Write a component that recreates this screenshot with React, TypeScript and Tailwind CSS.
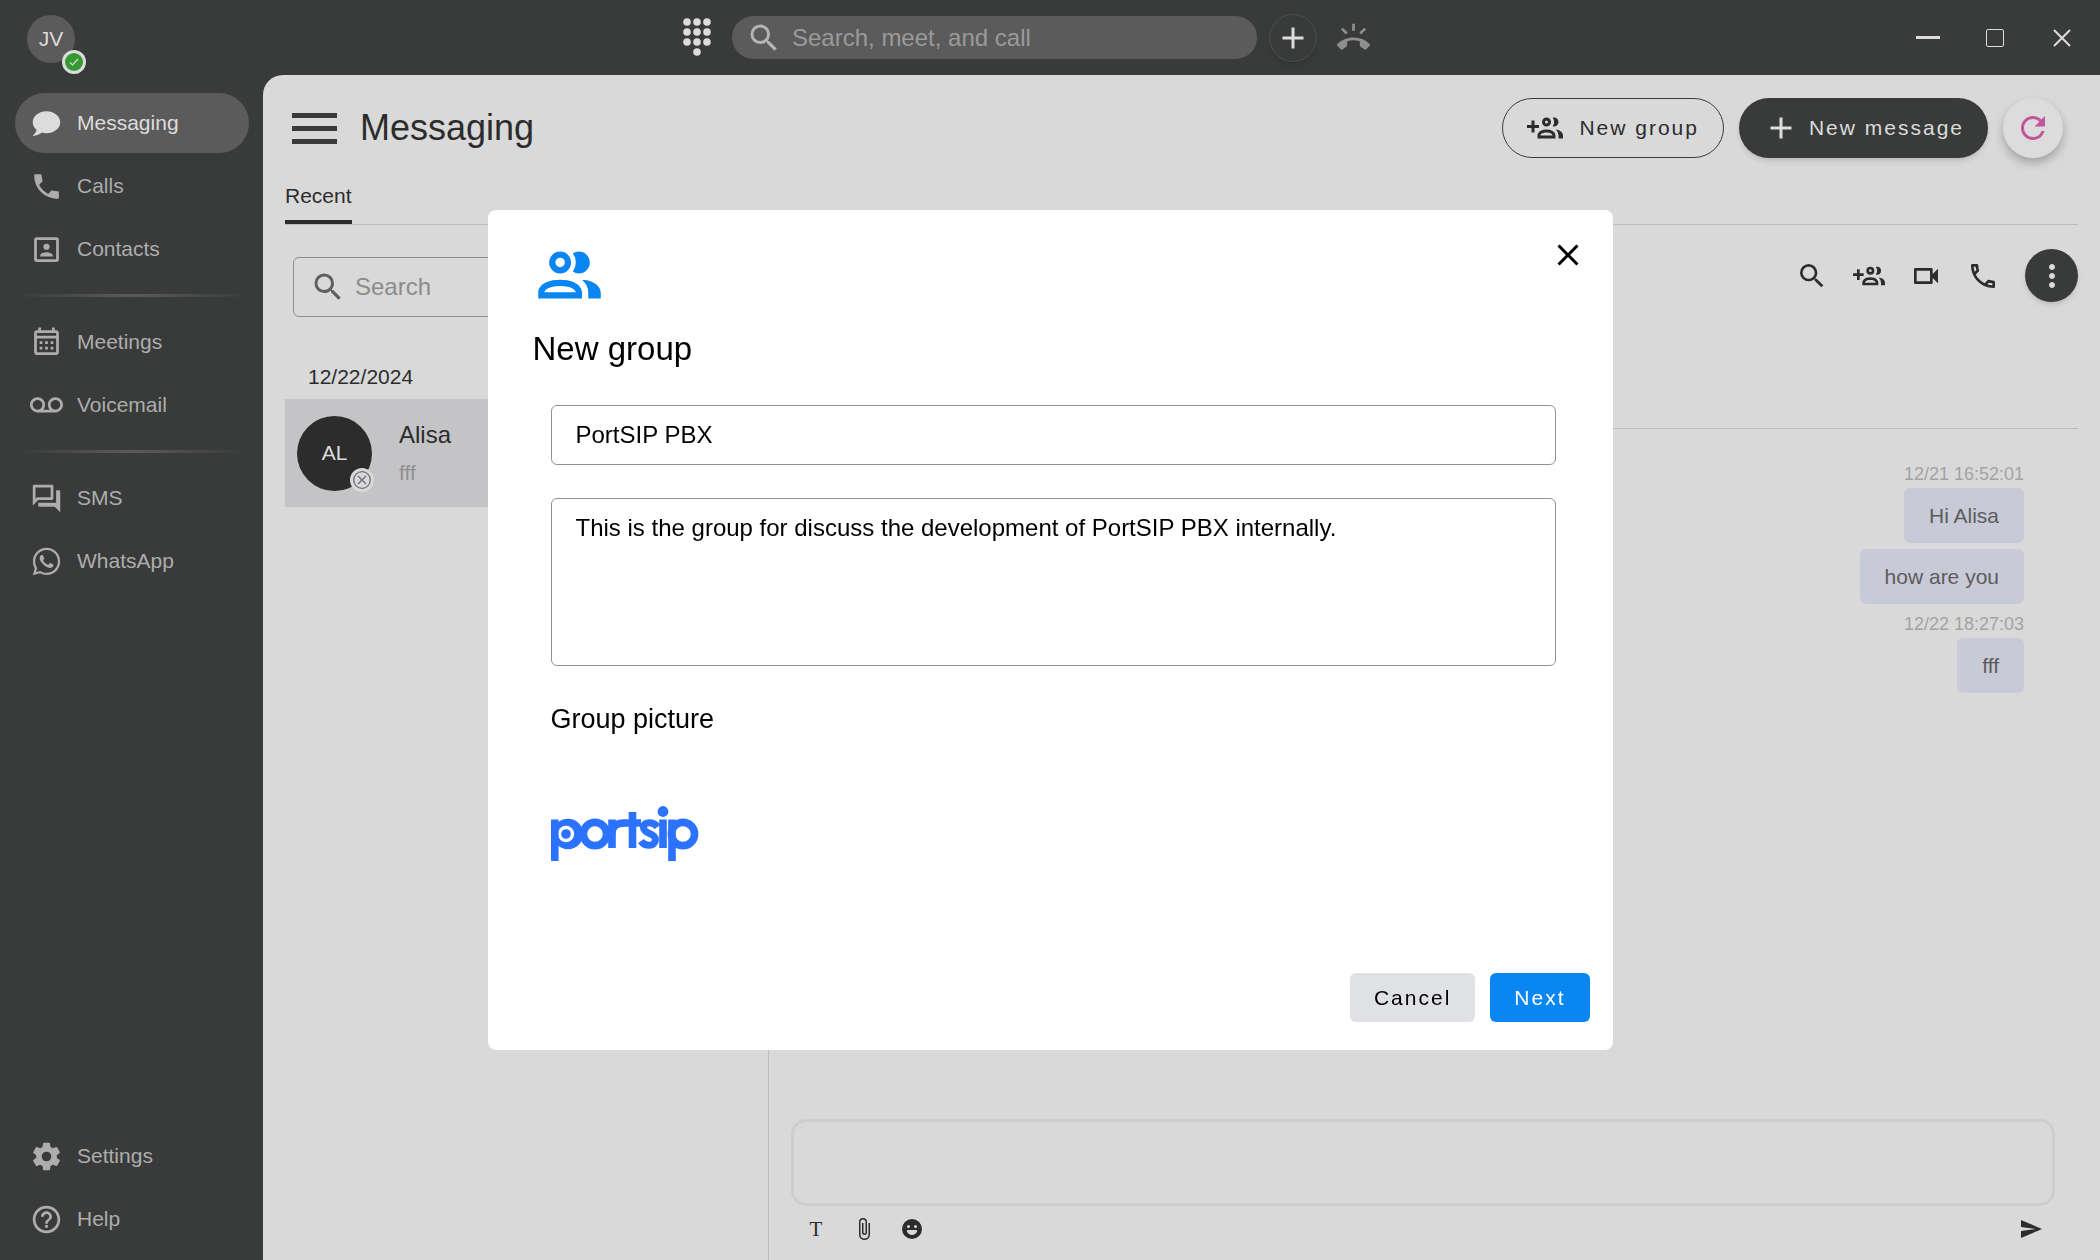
import React from "react";
import { MdHelpOutline, MdMoreVert, MdRefresh, MdRingVolume, MdVoicemail } from "react-icons/md";

const PATHS = {
  chat: "M12,3C17.5,3 22,6.58 22,11C22,15.42 17.5,19 12,19C10.76,19 9.57,18.82 8.47,18.5C5.55,21 2,21 2,21C4.33,18.67 4.7,17.1 4.75,16.5C3.05,15.07 2,13.13 2,11C2,6.58 6.5,3 12,3Z",
  phone:
    "M6.62,10.79C8.06,13.62 10.38,15.94 13.21,17.38L15.41,15.18C15.69,14.9 16.08,14.82 16.43,14.93C17.55,15.3 18.75,15.5 20,15.5A1,1 0 0,1 21,16.5V20A1,1 0 0,1 20,21A17,17 0 0,1 3,4A1,1 0 0,1 4,3H7.5A1,1 0 0,1 8.5,4C8.5,5.25 8.7,6.45 9.07,7.57C9.18,7.92 9.1,8.31 8.82,8.59L6.62,10.79Z",
  phoneOutline:
    "M20,15.5C18.8,15.5 17.5,15.3 16.4,14.9C16.3,14.9 16.2,14.9 16.1,14.9C15.8,14.9 15.6,15 15.4,15.2L13.2,17.4C10.4,15.9 8,13.6 6.6,10.8L8.8,8.6C9.1,8.3 9.2,7.9 9,7.6C8.7,6.5 8.5,5.2 8.5,4C8.5,3.5 8,3 7.5,3H4C3.5,3 3,3.5 3,4C3,13.4 10.6,21 20,21C20.5,21 21,20.5 21,20V16.5C21,16 20.5,15.5 20,15.5M5,5H6.5C6.6,5.9 6.8,6.8 7,7.6L5.8,8.8C5.4,7.6 5.1,6.3 5,5M19,19C17.7,18.9 16.4,18.6 15.2,18.2L16.4,17C17.2,17.2 18.1,17.4 19,17.4V19Z",
  accountBox:
    "M19,19H5V5H19M19,3H5A2,2 0 0,0 3,5V19A2,2 0 0,0 5,21H19A2,2 0 0,0 21,19V5A2,2 0 0,0 19,3M16.5,16.25C16.5,14.75 13.5,14 12,14C10.5,14 7.5,14.75 7.5,16.25V17H16.5M12,12.25A2.25,2.25 0 0,0 14.25,10A2.25,2.25 0 0,0 12,7.75A2.25,2.25 0 0,0 9.75,10A2.25,2.25 0 0,0 12,12.25Z",
  calendar:
    "M7 11H9V13H7V11M21 5V19C21 20.11 20.11 21 19 21H5C3.89 21 3 20.1 3 19V5C3 3.9 3.9 3 5 3H6V1H8V3H16V1H18V3H19C20.11 3 21 3.9 21 5M5 7H19V5H5V7M19 19V9H5V19H19M15 13V11H17V13H15M11 13V11H13V13H11M7 15H9V17H7V15M15 17V15H17V17H15M11 17V15H13V17H11Z",
  forum:
    "M15,4V11H5.17L4,12.17V4H15M16,2H3A1,1 0 0,0 2,3V17L6,13H16A1,1 0 0,0 17,12V3A1,1 0 0,0 16,2M21,6H19V15H6V17A1,1 0 0,0 7,18H18L22,22V7A1,1 0 0,0 21,6Z",
  whatsapp:
    "M12.04 2C6.58 2 2.13 6.45 2.13 11.91C2.13 13.66 2.59 15.36 3.45 16.86L2.05 22L7.3 20.62C8.75 21.41 10.38 21.83 12.04 21.83C17.5 21.83 21.95 17.38 21.95 11.92C21.95 9.27 20.92 6.78 19.05 4.91C17.18 3.03 14.69 2 12.04 2M12.05 3.67C14.25 3.67 16.31 4.53 17.87 6.09C19.42 7.65 20.28 9.72 20.28 11.92C20.28 16.46 16.58 20.15 12.04 20.15C10.56 20.15 9.11 19.76 7.85 19L7.55 18.83L4.43 19.65L5.26 16.61L5.06 16.29C4.24 15 3.8 13.47 3.8 11.91C3.81 7.37 7.5 3.67 12.05 3.67M8.53 7.33C8.37 7.33 8.1 7.39 7.87 7.64C7.65 7.89 7 8.5 7 9.71C7 10.93 7.89 12.1 8 12.27C8.14 12.44 9.76 14.94 12.25 16C12.84 16.27 13.3 16.42 13.66 16.53C14.25 16.72 14.79 16.69 15.22 16.63C15.7 16.56 16.68 16.03 16.89 15.45C17.1 14.87 17.1 14.38 17.04 14.27C16.97 14.17 16.81 14.11 16.56 14C16.31 13.86 15.09 13.26 14.87 13.18C14.64 13.1 14.5 13.06 14.31 13.3C14.15 13.55 13.67 14.11 13.53 14.27C13.38 14.44 13.24 14.46 13 14.34C12.74 14.21 11.94 13.95 11 13.11C10.26 12.45 9.77 11.64 9.62 11.39C9.5 11.15 9.61 11 9.73 10.89C9.84 10.78 10 10.6 10.1 10.45C10.23 10.31 10.27 10.2 10.35 10.04C10.43 9.87 10.39 9.73 10.33 9.61C10.27 9.5 9.77 8.26 9.56 7.77C9.36 7.29 9.16 7.35 9 7.34C8.86 7.34 8.7 7.33 8.53 7.33Z",
  cog: "M12,15.5A3.5,3.5 0 0,1 8.5,12A3.5,3.5 0 0,1 12,8.5A3.5,3.5 0 0,1 15.5,12A3.5,3.5 0 0,1 12,15.5M19.43,12.97C19.47,12.65 19.5,12.33 19.5,12C19.5,11.67 19.47,11.34 19.43,11L21.54,9.37C21.73,9.22 21.78,8.95 21.66,8.73L19.66,5.27C19.54,5.05 19.27,4.96 19.05,5.05L16.56,6.05C16.04,5.66 15.5,5.32 14.87,5.07L14.5,2.42C14.46,2.18 14.25,2 14,2H10C9.75,2 9.54,2.18 9.5,2.42L9.13,5.07C8.5,5.32 7.96,5.66 7.44,6.05L4.95,5.05C4.73,4.96 4.46,5.05 4.34,5.27L2.34,8.73C2.21,8.95 2.27,9.22 2.46,9.37L4.57,11C4.53,11.34 4.5,11.67 4.5,12C4.5,12.33 4.53,12.65 4.57,12.97L2.46,14.63C2.27,14.78 2.21,15.05 2.34,15.27L4.34,18.73C4.46,18.95 4.73,19.03 4.95,18.95L7.44,17.94C7.96,18.34 8.5,18.68 9.13,18.93L9.5,21.58C9.54,21.82 9.75,22 10,22H14C14.25,22 14.46,21.82 14.5,21.58L14.87,18.93C15.5,18.67 16.04,18.34 16.56,17.94L19.05,18.95C19.27,19.03 19.54,18.95 19.66,18.73L21.66,15.27C21.78,15.05 21.73,14.78 21.54,14.63L19.43,12.97Z",
  magnify:
    "M9.5,3A6.5,6.5 0 0,1 16,9.5C16,11.11 15.41,12.59 14.44,13.73L14.71,14H15.5L20.5,19L19,20.5L14,15.5V14.71L13.73,14.44C12.59,15.41 11.11,16 9.5,16A6.5,6.5 0 0,1 3,9.5A6.5,6.5 0 0,1 9.5,3M9.5,5C7,5 5,7 5,9.5C5,12 7,14 9.5,14C12,14 14,12 14,9.5C14,7 12,5 9.5,5Z",
  groupAdd:
    "M13 11A3 3 0 1 0 10 8A3 3 0 0 0 13 11M13 7A1 1 0 1 1 12 8A1 1 0 0 1 13 7M17.11 10.86A5 5 0 0 0 17.11 5.14A2.91 2.91 0 0 1 18 5A3 3 0 0 1 18 11A2.91 2.91 0 0 1 17.11 10.86M13 13C7 13 7 17 7 17V19H19V17S19 13 13 13M9 17C9 16.71 9.32 15 13 15C16.5 15 16.94 16.56 17 17M24 17V19H21V17A5.6 5.6 0 0 0 19.2 13.06C24 13.55 24 17 24 17M8 12H5V15H3V12H0V10H3V7H5V10H8Z",
  group:
    "M13.07 10.41A5 5 0 0 0 13.07 4.59A3.39 3.39 0 0 1 15 4A3.5 3.5 0 0 1 15 11A3.39 3.39 0 0 1 13.07 10.41M5.5 7.5A3.5 3.5 0 1 1 9 11A3.5 3.5 0 0 1 5.5 7.5M7.5 7.5A1.5 1.5 0 1 0 9 6A1.5 1.5 0 0 0 7.5 7.5M16 17V19H2V17S2 13 9 13 16 17 16 17M14 17C13.86 16.22 12.67 15 9 15S4.07 16.31 4 17M15.95 13A5.32 5.32 0 0 1 18 17V19H22V17S22 13.37 15.94 13Z",
  video:
    "M15,8V16H5V8H15M16,6H4A1,1 0 0,0 3,7V17A1,1 0 0,0 4,18H16A1,1 0 0,0 17,17V13.5L21,17.5V6.5L17,10.5V7A1,1 0 0,0 16,6Z",
  plus: "M19,13H13V19H11V13H5V11H11V5H13V11H19V13Z",
  close:
    "M19,6.41L17.59,5L12,10.59L6.41,5L5,6.41L10.59,12L5,17.59L6.41,19L12,13.41L17.59,19L19,17.59L13.41,12L19,6.41Z",
  clip: "M16.5,6V17.5A4,4 0 0,1 12.5,21.5A4,4 0 0,1 8.5,17.5V5A2.5,2.5 0 0,1 11,2.5A2.5,2.5 0 0,1 13.5,5V15.5A1,1 0 0,1 12.5,16.5A1,1 0 0,1 11.5,15.5V6H10V15.5A2.5,2.5 0 0,0 12.5,18A2.5,2.5 0 0,0 15,15.5V5A4,4 0 0,0 11,1A4,4 0 0,0 7,5V17.5A5.5,5.5 0 0,0 12.5,23A5.5,5.5 0 0,0 18,17.5V6H16.5Z",
  emoticon:
    "M12,18C14.28,18 16.22,16.66 17,14.5V13H7V14.5C7.78,16.66 9.72,18 12,18M8.5,11A1.5,1.5 0 0,0 10,9.5A1.5,1.5 0 0,0 8.5,8A1.5,1.5 0 0,0 7,9.5A1.5,1.5 0 0,0 8.5,11M15.5,11A1.5,1.5 0 0,0 17,9.5A1.5,1.5 0 0,0 15.5,8A1.5,1.5 0 0,0 14,9.5A1.5,1.5 0 0,0 15.5,11M12,2A10,10 0 1,0 22,12A10,10 0 0,0 12,2Z",
  send: "M2,21L23,12L2,3V10L17,12L2,14V21Z",
};

function Icon({ name, className }: { name: keyof typeof PATHS; className: string }) {
  return (
    <svg viewBox="0 0 24 24" fill="currentColor" fillRule="evenodd" aria-hidden="true" className={className}>
      <path d={PATHS[name]} />
    </svg>
  );
}

function Dialpad() {
  const dots = [5, 15, 25].flatMap((x) => [4, 14, 24].map((y) => [x, y]));
  return (
    <svg viewBox="0 0 30 40" fill="currentColor" aria-hidden="true" className="h-10 w-[30px]">
      {[...dots, [15, 34]].map(([x, y]) => (
        <circle key={`${x}-${y}`} cx={x} cy={y} r="3.8" />
      ))}
    </svg>
  );
}

function PortsipLogo() {
  return (
    <svg viewBox="0 0 148 56" role="img" aria-label="portsip" className="h-14 w-[148px] text-[#2b72ff]">
      <circle cx="17" cy="28" r="15.3" fill="currentColor" />
      <circle cx="15" cy="28" r="8.2" fill="white" />
      <circle cx="15" cy="28" r="4.8" fill="currentColor" />
      <g fill="none" stroke="currentColor" strokeWidth="7.6">
        <path d="M3.800 13.500V55" />
        <circle cx="44" cy="28" r="11.600" />
        <path d="M61 13.500V42" />
        <path d="M61 27C61 20 66 17 73 17H90" />
        <path d="M81.500 6V42" />
        <path d="M106.500 21C103 15.500 92.500 15 92.500 21.500C92.500 28 104.500 27 104.500 33.500C104.500 41 94 41 90 35" strokeWidth="7" />
        <path d="M112 13.500V42" />
        <path d="M121 13.500V55" />
        <circle cx="132" cy="28" r="11.600" />
      </g>
      <circle cx="112" cy="5.500" r="5.400" fill="currentColor" />
    </svg>
  );
}

function NavItem({ icon, label, active }: { icon: React.ReactNode; label: string; active?: boolean }) {
  return (
    <a
      href="#"
      aria-current={active ? "page" : undefined}
      className={
        active
          ? "flex h-[60px] items-center gap-[14px] rounded-full bg-[#5b5b5b] pl-[15px] text-[#dcdcdc]"
          : "flex h-[60px] items-center gap-[14px] rounded-full pl-[15px] text-[#adadad]"
      }
    >
      {icon}
      {label}
    </a>
  );
}

function NavDivider() {
  return <hr className="my-3 h-[3px] border-0 bg-linear-to-r from-transparent via-[#5b5b5b] to-transparent" />;
}

const navIcon = "size-[33px] shrink-0";

function TopBar() {
  return (
    <header className="flex h-[75px] shrink-0 items-center text-[#dcdcdc]">
      <div className="flex flex-1 pl-[27px]">
        <button aria-label="Account JV, available" className="relative mt-[3px] flex size-12 items-center justify-center rounded-full bg-[#5b5b5b] text-[21px]">
          JV
          <span className="absolute top-[35px] left-[35px] flex size-6 items-center justify-center rounded-full bg-[#dcdcdc]">
            <span className="flex size-[18px] items-center justify-center rounded-full bg-[#369a33]">
              <svg viewBox="0 0 12 12" fill="none" stroke="currentColor" strokeWidth="1.2" aria-hidden="true" className="size-3">
                <path d="M2 6.500L4.500 9L10 3" />
              </svg>
            </span>
          </span>
        </button>
      </div>
      <div className="mr-[52px] flex items-center">
        <button aria-label="Dial pad" className="mr-5">
          <Dialpad />
        </button>
        <label className="flex h-[43px] w-[525px] items-center gap-[10px] rounded-full bg-[#5b5b5b] pl-[14px]">
          <Icon name="magnify" className="size-9 shrink-0 text-[#b5b5b5]" />
          <input aria-label="Search, meet, and call" placeholder="Search, meet, and call" className="w-full bg-transparent text-2xl outline-none placeholder:text-[#9a9a9a]" />
        </label>
        <button aria-label="Add" className="ml-3 flex size-12 items-center justify-center rounded-full border border-[#4c4d4c] shadow-md">
          <Icon name="plus" className="size-9" />
        </button>
        <button aria-label="Incoming calls" className="ml-5 text-[#8e8e8e]">
          <MdRingVolume className="size-[33px]" />
        </button>
      </div>
      <div className="flex flex-1 items-center justify-end gap-9 pr-[23px]">
        <button aria-label="Minimize" className="flex size-[31px] items-center justify-center">
          <span className="h-[3px] w-6 bg-current" />
        </button>
        <button aria-label="Maximize" className="flex size-[31px] items-center justify-center">
          <span className="size-[18px] rounded-xs border border-current" />
        </button>
        <button aria-label="Close window" className="flex size-[31px] items-center justify-center">
          <svg viewBox="0 0 18 18" stroke="currentColor" strokeWidth="2" aria-hidden="true" className="size-[18px]">
            <path d="M1 1L17 17M17 1L1 17" />
          </svg>
        </button>
      </div>
    </header>
  );
}

function Sidebar() {
  return (
    <nav className="flex w-[263px] shrink-0 flex-col gap-[3px] pt-[18px] pr-[14px] pb-[11px] pl-[15px]">
      <NavItem active icon={<Icon name="chat" className={navIcon} />} label="Messaging" />
      <NavItem icon={<Icon name="phone" className={navIcon} />} label="Calls" />
      <NavItem icon={<Icon name="accountBox" className={navIcon} />} label="Contacts" />
      <NavDivider />
      <NavItem icon={<Icon name="calendar" className={navIcon} />} label="Meetings" />
      <NavItem icon={<MdVoicemail className={navIcon} />} label="Voicemail" />
      <NavDivider />
      <NavItem icon={<Icon name="forum" className={navIcon} />} label="SMS" />
      <NavItem icon={<Icon name="whatsapp" className={navIcon} />} label="WhatsApp" />
      <div className="flex-1" />
      <NavItem icon={<Icon name="cog" className={navIcon} />} label="Settings" />
      <NavItem icon={<MdHelpOutline className={navIcon} />} label="Help" />
    </nav>
  );
}

function PageHeader() {
  return (
    <div className="flex items-center pt-[23px] pr-[37px] pl-[29px]">
      <button aria-label="Toggle menu" className="flex w-[45px] flex-col gap-2">
        <span className="h-[5px] bg-[#393b3a]" />
        <span className="h-[5px] bg-[#393b3a]" />
        <span className="h-[5px] bg-[#393b3a]" />
      </button>
      <h1 className="ml-[23px] flex-1 text-4xl">Messaging</h1>
      <button className="flex h-[60px] items-center gap-4 rounded-full border border-[#393b3a] px-6 tracking-[2px]">
        <Icon name="groupAdd" className="size-9" />
        New group
      </button>
      <button className="ml-[15px] flex h-[60px] items-center gap-[10px] rounded-full bg-[#393b3a] px-6 tracking-[2px] text-[#dcdcdc] shadow-md">
        <Icon name="plus" className="size-9" />
        New message
      </button>
      <button aria-label="Refresh" className="ml-[15px] flex size-[60px] items-center justify-center rounded-full bg-[#dcdcdc] text-[#c2569b] shadow-[0_5px_10px_rgba(0,0,0,0.25)]">
        <MdRefresh className="size-9" />
      </button>
    </div>
  );
}

function ConversationList() {
  return (
    <section aria-label="Conversations" className="w-[484px] shrink-0 border-r border-[#bcbcbc]">
      <label className="mx-2 mt-8 flex h-[60px] items-center gap-[9px] rounded-md border border-[#8d8d8d] px-4">
        <Icon name="magnify" className="size-9 shrink-0 text-[#5f5f5f]" />
        <input aria-label="Search conversations" placeholder="Search" className="w-full bg-transparent text-2xl outline-none placeholder:text-[#8c8c8c]" />
      </label>
      <h2 className="mt-[45px] pl-[23px] leading-[30px]">12/22/2024</h2>
      <a href="#" className="mt-[7px] flex h-[108px] items-center bg-[#c4c4c7] pl-3">
        <span className="relative flex size-[75px] shrink-0 items-center justify-center rounded-full bg-[#2c2c2c] text-[#dcdcdc]">
          AL
          <span className="absolute right-[-2px] bottom-[-1px] flex size-6 items-center justify-center rounded-full bg-[#d9d9d9]">
            <svg viewBox="0 0 18 18" fill="none" stroke="#6e6f76" strokeWidth="1.300" aria-hidden="true" className="size-[18px]">
              <circle cx="9" cy="9" r="8.300" />
              <path d="M5 5L13 13M13 5L5 13" />
            </svg>
          </span>
        </span>
        <span className="ml-[27px] flex flex-col gap-[7px]">
          <span className="text-2xl">Alisa</span>
          <span className="text-[#8f8f8f]">fff</span>
        </span>
      </a>
    </section>
  );
}

function Timestamp({ children }: { children: string }) {
  return <time className="text-lg leading-7 text-[#a3a3a3]">{children}</time>;
}

function Bubble({ children }: { children: string }) {
  return <p className="mb-[6px] flex h-[55px] items-center rounded-md bg-[#c8cad7] px-[25px] text-[#5c5c5c]">{children}</p>;
}

function ChatPane() {
  return (
    <section aria-label="Chat" className="flex min-w-0 flex-1 flex-col">
      <div className="flex h-[204px] shrink-0 items-start justify-end border-b border-[#bcbcbc] pt-6">
        <div className="flex items-center">
          <div className="mr-[26px] flex items-center gap-[25px]">
            <button aria-label="Search messages"><Icon name="magnify" className="size-8" /></button>
            <button aria-label="Add people"><Icon name="groupAdd" className="size-8" /></button>
            <button aria-label="Video call"><Icon name="video" className="size-8" /></button>
            <button aria-label="Call"><Icon name="phoneOutline" className="size-8" /></button>
          </div>
          <button aria-label="More options" className="flex size-[53px] items-center justify-center rounded-full bg-[#393b3a] text-[#dcdcdc] shadow-md">
            <MdMoreVert className="size-9" />
          </button>
        </div>
      </div>
      <div className="flex flex-1 flex-col items-end pt-[31px] pr-[54px]">
        <Timestamp>12/21 16:52:01</Timestamp>
        <Bubble>Hi Alisa</Bubble>
        <Bubble>how are you</Bubble>
        <Timestamp>12/22 18:27:03</Timestamp>
        <Bubble>fff</Bubble>
      </div>
      <div className="pr-[23px] pl-[22px]">
        <textarea aria-label="Message" className="block h-[87px] w-full resize-none rounded-[15px] border-[3px] border-[#cdcdcd] bg-transparent p-3 outline-none" />
        <div className="flex h-[54px] items-center gap-6 pr-3 pb-2 pl-[13px]">
          <button aria-label="Text format" className="w-6 font-['Liberation_Serif',serif] text-[21px]">T</button>
          <button aria-label="Attach file"><Icon name="clip" className="size-6" /></button>
          <button aria-label="Emoji"><Icon name="emoticon" className="size-6" /></button>
          <button aria-label="Send" className="ml-auto"><Icon name="send" className="size-6" /></button>
        </div>
      </div>
    </section>
  );
}

function NewGroupDialog() {
  return (
    <div className="fixed inset-0 flex items-center justify-center">
      <div role="dialog" aria-modal="true" aria-labelledby="dialog-title" className="flex h-[840px] w-[1125px] max-w-full flex-col rounded-lg bg-white text-black">
        <div className="flex items-start justify-between pt-[29px] pr-[27px] pl-11">
          <Icon name="group" className="size-[75px] text-[#0a86f2]" />
          <button aria-label="Close dialog" className="-mt-[2px]">
            <Icon name="close" className="size-9" />
          </button>
        </div>
        <h2 id="dialog-title" className="mt-[11px] pl-[45px] text-[33px] leading-[48px]">New group</h2>
        <div className="flex flex-1 flex-col pr-[57px] pl-[63px]">
          <input aria-label="Group name" defaultValue="PortSIP PBX" className="mt-8 h-[60px] rounded-md border border-[#929292] px-6 text-2xl outline-none" />
          <textarea
            aria-label="Group description"
            defaultValue="This is the group for discuss the development of PortSIP PBX internally."
            className="mt-[33px] h-[168px] resize-none rounded-md border border-[#929292] px-6 py-[13px] text-2xl outline-none"
          />
          <h3 className="mt-[35px] text-[27px] leading-9">Group picture</h3>
          <div className="mt-[69px]">
            <PortsipLogo />
          </div>
        </div>
        <div className="flex justify-end gap-[15px] pr-[23px] pb-7">
          <button className="h-[49px] rounded-md bg-[#e0e1e5] px-6 tracking-[2px]">Cancel</button>
          <button className="h-[49px] rounded-md bg-[#0a86f2] px-6 tracking-[2px] text-white">Next</button>
        </div>
      </div>
    </div>
  );
}

export default function App() {
  return (
    <div className="flex h-screen flex-col overflow-hidden bg-[#393b3a] font-['Liberation_Sans',Arial,sans-serif] text-[21px] leading-[30px]">
      <TopBar />
      <div className="flex min-h-0 flex-1">
        <Sidebar />
        <main className="flex min-w-0 flex-1 flex-col rounded-tl-[20px] bg-[#d9d9d9] text-[#2c2c2c]">
          <PageHeader />
          <div className="mr-[22px] ml-[22px] flex border-b border-[#bcbcbc] pt-[22px]" role="tablist">
            <button role="tab" aria-selected="true" className="h-11 border-b-4 border-[#2c2c2c] pb-2">
              Recent
            </button>
          </div>
          <div className="mr-[22px] ml-[22px] flex min-h-0 flex-1">
            <ConversationList />
            <ChatPane />
          </div>
        </main>
      </div>
      <NewGroupDialog />
    </div>
  );
}
